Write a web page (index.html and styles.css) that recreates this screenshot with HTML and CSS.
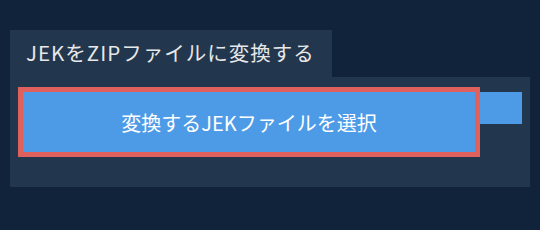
FILE: index.html
```html
<!DOCTYPE html>
<html lang="ja">
<head>
<meta charset="utf-8">
<link rel="stylesheet" href="styles.css">
</head>
<body>
<div class="page">
  <div class="tab">JEKをZIPファイルに変換する</div>
  <div class="panel">
    <div class="row">
      <div class="pick">変換するJEKファイルを選択</div>
      <div class="ext"></div>
    </div>
  </div>
</div>
</body>
</html>
```
FILE: styles.css
```css
html, body {
  margin: 0;
  padding: 0;
  background: #10233a;
  width: 540px;
  height: 230px;
  overflow: hidden;
  font-family: "Noto Sans CJK JP", "Noto Sans", sans-serif;
}
.page {
  padding: 30px 10px 0 10px;
}
.tab {
  display: inline-flex;
  align-items: center;
  box-sizing: border-box;
  width: 322px;
  height: 47px;
  padding: 0 0 3px 16px;
  background: #22364d;
  color: #e8e8e8;
  font-size: 20.5px;
  letter-spacing: 1px;
}
.panel {
  width: 520px;
  box-sizing: border-box;
  background: #22364d;
  padding: 10px 8px 30px 8px;
}
.row {
  display: flex;
  align-items: flex-start;
}
.pick {
  box-sizing: border-box;
  width: 462px;
  height: 70px;
  border: 5px solid #df605d;
  background: #4d9be7;
  color: #ffffff;
  font-size: 20px;
  display: flex;
  align-items: center;
  justify-content: center;
}
.ext {
  flex: 1;
  height: 32px;
  margin-top: 5px;
  background: #4d9be7;
}
```
